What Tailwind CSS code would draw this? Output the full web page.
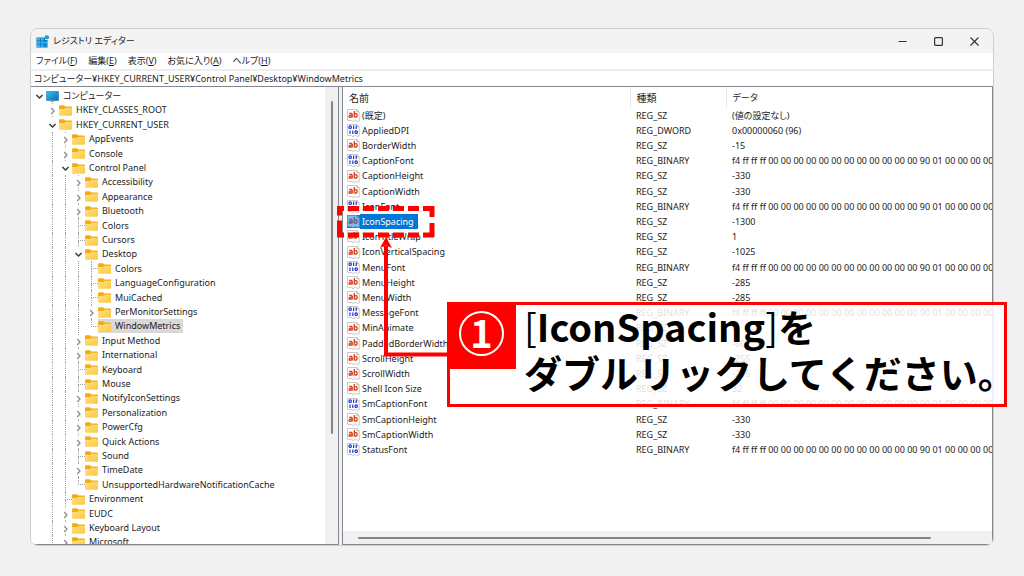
<!DOCTYPE html>
<html lang="ja">
<head>
<meta charset="utf-8">
<meta name="viewport" content="width=device-width, initial-scale=1">
<title>レジストリ エディター</title>
<script src="https://cdn.jsdelivr.net/npm/@tailwindcss/browser@4"></script>
</head>
<body class="relative flex h-screen flex-col overflow-hidden bg-[#f1f1f1] px-[30px] pt-7 pb-[30px] font-['Noto_Sans','Noto_Sans_CJK_JP',sans-serif] text-[9px] leading-[14px] text-[#1c1c1c]">

<svg class="absolute size-0" aria-hidden="true">
  <defs>
    <linearGradient id="gold" x1="0" y1="0" x2="1" y2="1"><stop offset="0" stop-color="#ffe08a"/><stop offset="1" stop-color="#fdc83a"/></linearGradient>
    <linearGradient id="screen" x1="0" y1="0" x2="1" y2="1"><stop offset="0" stop-color="#35c1e8"/><stop offset="1" stop-color="#0f6ab8"/></linearGradient>
  </defs>
  <symbol id="folder" viewBox="0 0 13 11"><path d="M0 1.2Q0 .2 1 .2H5L6.4 1.5H12Q13 1.5 13 2.5V6H0Z" fill="#f3ac12"/><path d="M0 4H5.2L6.6 2.8H13V9.8Q13 10.8 12 10.8H1Q0 10.8 0 9.8Z" fill="url(#gold)"/></symbol>
  <symbol id="computer" viewBox="0 0 13 11"><rect x=".3" y=".3" width="12.4" height="9.2" rx=".6" fill="url(#screen)" stroke="#1c6fa4" stroke-width=".5"/><path d="M4.5 10.6H8.5M6.5 9.5V10.6" stroke="#7d95a5" stroke-width=".8"/></symbol>
  <symbol id="page" viewBox="0 0 13 13"><path d="M.5 .5H9.8L12.2 2.8V12L10.5 12.4L8.5 11.4L6 12.5L4 11.4L2 11.8L.5 11Z" fill="#fff" stroke="#b9b9b9" stroke-width=".8"/><path d="M9.8 .5V2.8H12.2" fill="#ddd" stroke="#999" stroke-width=".6"/></symbol>
  <symbol id="str" viewBox="0 0 13 13"><use href="#page"/><g fill="none" stroke="#d8431f" stroke-width="1.4"><path d="M2.2 4.6Q5 3.5 5.2 5.6V8.6M5.2 6.2Q2 5.8 2.1 7.5Q2.6 9 5.2 7.4"/><path d="M7.3 2V8.6M7.3 5.4Q8.6 4.2 9.7 4.9Q10.6 6.2 9.8 7.6Q8.6 8.8 7.3 7.6"/></g></symbol>
  <symbol id="bin" viewBox="0 0 13 13"><use href="#page"/><g fill="none" stroke="#1c33d6" stroke-width="1.2"><ellipse cx="3.2" cy="3.2" rx="1.2" ry="1.3"/><path d="M6.6 1.4V5.1M9.2 1.4V5.1M3 6.4V10.1M5.8 6.4V10.1"/><ellipse cx="9.2" cy="8.2" rx="1.2" ry="1.3"/></g></symbol>
  <symbol id="closed" viewBox="0 0 13 14"><path d="M6.5 0V2M6.5 13V14" stroke="#a8a8a8" stroke-dasharray="1 1"/><path d="M5.2 5L8 8L5.2 11" fill="none" stroke="#8c8c8c" stroke-width="1.3"/></symbol>
  <symbol id="open" viewBox="0 0 13 14"><path d="M3.4 6L6.5 9L9.6 6" fill="none" stroke="#3a3a3a" stroke-width="1.5"/></symbol>
</svg>

<main class="flex min-h-0 flex-1 flex-col overflow-hidden rounded-lg border border-[#cfcfcf] bg-[#f0f0f0]">
  <header class="flex h-6 shrink-0 items-center bg-[#f3f3f3] pr-px pl-[5px]">
    <svg class="size-[13px] shrink-0" viewBox="0 0 13 13"><path d="M.5 2.5H9V5H11.5V12.5H.5Z" fill="#0b74b8"/><g fill="#35b5ea"><path d="M1 3H4V5.6H1ZM4.7 3H7.7V5.6H4.7ZM1 6.2H4V8.8H1ZM4.7 6.2H7.7V8.8H4.7ZM8.4 6.2H11V8.8H8.4ZM1 9.5H4V12H1ZM4.7 9.5H7.7V12H4.7Z"/></g><path d="M8.4 9.5H11V12H8.4Z" fill="#168bd0"/><path d="M10.5 0L13 1.2V3.6L10.5 4.6L8.8 3.4V1Z" fill="#2196d6"/></svg>
    <h1 class="ml-1 flex-1 [font-feature-settings:'palt']">レジストリ エディター</h1>
    <button type="button" aria-label="最小化" class="flex h-6 w-9 items-center justify-center"><svg class="size-[9px]" viewBox="0 0 9 9"><path d="M.5 4.5H8.5" stroke="#333"/></svg></button>
    <button type="button" aria-label="最大化" class="flex h-6 w-9 items-center justify-center"><svg class="size-[9px]" viewBox="0 0 9 9"><rect x=".6" y=".6" width="7.8" height="7.8" rx="1" fill="none" stroke="#333" stroke-width="1.2"/></svg></button>
    <button type="button" aria-label="閉じる" class="flex h-6 w-9 items-center justify-center"><svg class="size-[9px]" viewBox="0 0 9 9"><path d="M.5 .5L8.5 8.5M8.5 .5L.5 8.5" stroke="#333" stroke-width="1.1"/></svg></button>
  </header>
  <nav class="flex h-4 shrink-0 items-center gap-[11px] bg-white pl-[5px] [font-feature-settings:'palt']">
    <button type="button">ファイル(<u>F</u>)</button><button type="button">編集(<u>E</u>)</button><button type="button">表示(<u>V</u>)</button><button type="button">お気に入り(<u>A</u>)</button><button type="button">ヘルプ(<u>H</u>)</button>
  </nav>
  <input aria-label="アドレス" value="コンピューター¥HKEY_CURRENT_USER¥Control Panel¥Desktop¥WindowMetrics" class="block h-[17px] w-full shrink-0 border-t-2 border-[#ededed] bg-white pl-[3px] outline-none [font-feature-settings:'palt']">
  <div class="flex min-h-0 flex-1 border-t border-[#828790]">
    <section aria-label="キー" class="flex w-[308px] shrink-0 border-r border-b border-[#828790] bg-[#f0f0f0]">
      <div id="tree" role="tree" class="min-w-0 flex-1 overflow-hidden bg-white pt-0.5 pl-0.5 [&>*:nth-child(5n)]:h-[15px] [&>*:nth-child(5n+3)]:h-[15px]"></div>
      <div class="flex w-[13px] justify-center pt-[14px]"><div class="h-[333px] w-0.5 rounded-full bg-[#858585]"></div></div>
    </section>
    <section aria-label="値" class="ml-[3px] flex min-w-0 flex-1 flex-col border-x border-b border-[#828790] bg-white">
      <div class="min-h-0 flex-1 overflow-hidden">
        <table class="w-full table-fixed border-collapse">
          <thead><tr class="h-[21px] text-left">
            <th class="w-[287px] border-r border-[#e5e5e5] p-0 pl-1.5 text-[10px] font-normal">名前</th>
            <th class="w-24 border-r border-[#e5e5e5] p-0 pl-1.5 text-[10px] font-normal">種類</th>
            <th class="p-0 pl-1.5 font-normal [font-feature-settings:'palt']">データ</th>
          </tr></thead>
          <tbody id="values" class="[&>tr:nth-child(5n)]:h-4"></tbody>
        </table>
      </div>
      <div class="flex h-[13px] shrink-0 items-center bg-[#f0f0f0] pr-[61px] pl-[15px]"><div class="h-0.5 flex-1 rounded-full bg-[#858585]"></div></div>
    </section>
  </div>
</main>

<svg class="pointer-events-none absolute top-0 left-0 h-[576px] w-[1024px]" viewBox="0 0 1024 576" fill="none" stroke="#fe0000">
  <path d="M337 208.5H434M337 235H434" stroke-width="5" stroke-dasharray="11 4" stroke-dashoffset="4"/>
  <path d="M339.5 206V215.5M339.5 220.5V237M432 206V217M432 223V237" stroke-width="5"/>
  <path d="M448 354.5H386V246" stroke-width="4"/>
  <path d="M386 237L392 248L386 245.5L380 248Z" fill="#fe0000" stroke="none"/>
</svg>

<aside class="absolute top-[302px] left-[447px] flex h-[105px] w-[560px] border-[3px] border-[#fe0000] bg-white/85 text-black">
  <div class="-mt-[3px] -ml-[3px] flex h-[67px] w-[69px] shrink-0 items-center justify-center bg-[#fe0000] pb-1">
    <span class="flex size-[45px] items-center justify-center rounded-full border-2 border-white pb-1 font-['Noto_Sans_CJK_JP',sans-serif] text-[38px] leading-none font-bold text-white">1</span>
  </div>
  <p class="-mt-0.5 ml-2 font-['Noto_Sans_CJK_JP',sans-serif] text-[38px] leading-[46px] font-bold whitespace-nowrap"><span class="font-normal">[</span>IconSpacing<span class="font-normal">]</span>を<br>ダブルリックしてください。</p>
</aside>

<script>
// [level, name, state]: "o" expanded, "c" collapsed, "-" no children, "l" last without children
const keys = [
  [0, 'コンピューター', 'o'], [1, 'HKEY_CLASSES_ROOT', 'c'], [1, 'HKEY_CURRENT_USER', 'o'],
  [2, 'AppEvents', 'c'], [2, 'Console', 'c'], [2, 'Control Panel', 'o'],
  [3, 'Accessibility', 'c'], [3, 'Appearance', 'c'], [3, 'Bluetooth', 'c'], [3, 'Colors', '-'], [3, 'Cursors', '-'], [3, 'Desktop', 'o'],
  [4, 'Colors', '-'], [4, 'LanguageConfiguration', '-'], [4, 'MuiCached', '-'], [4, 'PerMonitorSettings', 'c'], [4, 'WindowMetrics', 'l'],
  [3, 'Input Method', 'c'], [3, 'International', 'c'], [3, 'Keyboard', '-'], [3, 'Mouse', '-'], [3, 'NotifyIconSettings', 'c'],
  [3, 'Personalization', 'c'], [3, 'PowerCfg', 'c'], [3, 'Quick Actions', 'c'], [3, 'Sound', '-'], [3, 'TimeDate', 'c'],
  [3, 'UnsupportedHardwareNotificationCache', 'l'], [2, 'Environment', '-'], [2, 'EUDC', 'c'], [2, 'Keyboard Layout', 'c'], [2, 'Microsoft', 'c']
];
const gap = '<span class="w-[13px] shrink-0"></span>';
const guide = '<span class="flex w-[13px] shrink-0 justify-center"><span class="border-l border-dotted border-[#a0a0a0]"></span></span>';
const leaf = last => `<span class="flex w-[13px] shrink-0 pl-1.5"><span class="flex flex-1 flex-col"><span class="flex-1 border-b border-l border-dotted border-[#a0a0a0]"></span><span class="flex-1 ${last ? '' : 'border-l border-dotted border-[#a0a0a0]'}"></span></span></span>`;
document.getElementById('tree').innerHTML = keys.map(([level, name, state]) => {
  const sel = name === 'WindowMetrics';
  const arrow = state === 'o' ? 'open' : 'closed';
  const toggle = state === 'o' || state === 'c'
    ? `<button type="button" aria-label="${name}" class="w-[13px] shrink-0"><svg class="h-[14px] w-[13px]"><use href="#${arrow}"/></svg></button>`
    : leaf(state === 'l');
  return `<div role="treeitem" class="flex h-[14px] whitespace-nowrap">${level ? gap : ''}${guide.repeat(Math.max(0, level - 1))}${toggle}<span class="flex items-center gap-1 pr-[3px] ${sel ? 'bg-[#d9d9d9]' : ''}"><svg class="h-[11px] w-[13px]"><use href="#${level ? 'folder' : 'computer'}"/></svg><span class="[font-feature-settings:'palt']">${name}</span></span></div>`;
}).join('');

const blob = 'f4 ff ff ff 00 00 00 00 00 00 00 00 00 00 00 00 90 01 00 00 00 00 00 00';
const values = [
  ['(既定)', 'SZ', '(値の設定なし)'], ['AppliedDPI', 'DWORD', '0x00000060 (96)'], ['BorderWidth', 'SZ', '-15'],
  ['CaptionFont', 'BINARY', blob], ['CaptionHeight', 'SZ', '-330'], ['CaptionWidth', 'SZ', '-330'], ['IconFont', 'BINARY', blob],
  ['IconSpacing', 'SZ', '-1300'], ['IconTitleWrap', 'SZ', '1'], ['IconVerticalSpacing', 'SZ', '-1025'], ['MenuFont', 'BINARY', blob],
  ['MenuHeight', 'SZ', '-285'], ['MenuWidth', 'SZ', '-285'], ['MessageFont', 'BINARY', blob], ['MinAnimate', 'SZ', '0'],
  ['PaddedBorderWidth', 'SZ', '-60'], ['ScrollHeight', 'SZ', '-255'], ['ScrollWidth', 'SZ', '-255'], ['Shell Icon Size', 'SZ', '32'],
  ['SmCaptionFont', 'BINARY', blob], ['SmCaptionHeight', 'SZ', '-330'], ['SmCaptionWidth', 'SZ', '-330'], ['StatusFont', 'BINARY', blob]
];
document.getElementById('values').innerHTML = values.map(([name, type, data]) => {
  const sel = name === 'IconSpacing';
  return `<tr class="h-[15px] whitespace-nowrap"><td class="p-0 pl-1"><span class="flex items-center"><span class="${sel ? 'bg-[#0078d7]' : ''}"><svg class="size-[13px] ${sel ? 'opacity-50' : ''}"><use href="#${type === 'SZ' ? 'str' : 'bin'}"/></svg></span><span class="pl-0.5 ${sel ? 'bg-[#0078d7] pr-1 leading-[15px] text-white' : ''}">${name}</span></span></td><td class="p-0 pl-1.5">REG_${type}</td><td class="overflow-hidden p-0 pl-1.5 [font-feature-settings:'palt']">${data}</td></tr>`;
}).join('');
</script>
</body>
</html>
